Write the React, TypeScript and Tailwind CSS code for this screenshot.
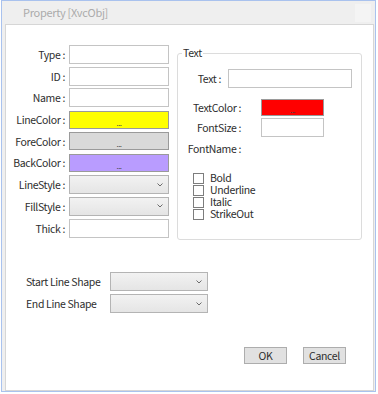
import React from "react";

const font = "font-['Noto_Sans_CJK_KR','Noto_Sans',sans-serif]";

function TextBox({ w = "w-[100px]" }: { w?: string }) {
  return <div className={`${w} h-[19px] border border-[#c4c4c4] bg-white`} />;
}

function ColorBox({ color, w = "w-[100px]", h = "h-[18px]" }: { color: string; w?: string; h?: string }) {
  return (
    <div
      className={`${w} ${h} border border-[#9a9a9a] flex items-end justify-center pb-px`}
      style={{ backgroundColor: color }}
    >
      <span className="text-[8px] leading-[8px] text-[#444] tracking-[-0.6px]">...</span>
    </div>
  );
}

function Combo({ w = "w-[100px]" }: { w?: string }) {
  return (
    <div className={`${w} h-[19px] border border-[#b4b4b4] bg-gradient-to-b from-[#f2f2f2] to-[#e5e5e5] flex items-center justify-end pr-[5px]`}>
      <svg width="6" height="4" viewBox="0 0 6 4">
        <path d="M0.5 0.5 L3 3 L5.5 0.5" stroke="#6b6b6b" strokeWidth="1" fill="none" />
      </svg>
    </div>
  );
}

function Row({ label, children }: { label: string; children: React.ReactNode }) {
  return (
    <div className="flex items-center h-[19px]">
      <span className="w-[60px] text-right pr-px leading-[19px] whitespace-nowrap">{label}</span>
      <div className="ml-[3px]">{children}</div>
    </div>
  );
}

function Check({ label }: { label: string }) {
  return (
    <div className="flex items-center h-[12px]">
      <span className="w-[11px] h-[11px] border border-[#7d7d7d] bg-white" />
      <span className="ml-[6px] leading-[12px] h-[12px]">{label}</span>
    </div>
  );
}

export default function App() {
  return (
    <div className={`w-[378px] h-[394px] bg-white pl-px ${font} text-[10.5px] tracking-[-0.35px] text-[#2e2e2e]`}>
      <div className="w-[375px] h-[392px] border border-[#a9c2ee] bg-[#efefef] flex flex-col">
        {/* title bar */}
        <div className="h-[23px] flex items-center pl-[21px] pr-[4px]">
          <span className="text-[11px] tracking-[-0.3px] text-[#ababab]">Property [XvcObj]</span>
          <span className="ml-auto w-[16px] h-[18px] bg-[#f4f4f4]" />
        </div>

        {/* client area */}
        <div className="flex-1 ml-[3px] mr-px bg-white border border-[#d6d6d6] flex flex-col">
          <div className="flex items-start pt-[20px]">
            {/* left column */}
            <div className="flex flex-col gap-[2.7px]">
              <Row label="Type :"><TextBox /></Row>
              <Row label="ID :"><TextBox /></Row>
              <Row label="Name :"><TextBox /></Row>
              <Row label="LineColor :"><ColorBox color="#ffff00" /></Row>
              <Row label="ForeColor :"><ColorBox color="#d9d9d9" /></Row>
              <Row label="BackColor :"><ColorBox color="#b99cff" /></Row>
              <Row label="LineStyle :"><Combo /></Row>
              <Row label="FillStyle :"><Combo /></Row>
              <Row label="Thick :"><TextBox /></Row>
            </div>

            {/* Text group */}
            <div className="relative ml-[8px] mt-[8px] w-[185px] h-[187px] border border-[#dcdcdc] rounded-[3px] flex flex-col">
              <span className="absolute left-[4px] top-[-9px] bg-white px-px leading-[16px]">Text</span>

              <div className="flex items-center mt-[15px]">
                <span className="w-[43px] text-right leading-[19px]">Text :</span>
                <div className="ml-[7px]"><TextBox w="w-[124px]" /></div>
              </div>

              <div className="flex items-center mt-[11px]">
                <span className="w-[63px] text-right leading-[17px]">TextColor :</span>
                <div className="ml-[20px]"><ColorBox color="#ff0000" w="w-[63px]" h="h-[17px]" /></div>
              </div>

              <div className="flex items-center mt-[2px]">
                <span className="w-[63px] text-right leading-[19px]">FontSize :</span>
                <div className="ml-[20px]"><TextBox w="w-[63px]" /></div>
              </div>

              <div className="flex items-center mt-[2px] h-[19px]">
                <span className="w-[63px] text-right leading-[19px]">FontName :</span>
              </div>

              <div className="flex flex-col ml-[15px] mt-[14px]">
                <Check label="Bold" />
                <Check label="Underline" />
                <Check label="Italic" />
                <Check label="StrikeOut" />
              </div>
            </div>
          </div>

          {/* line shape */}
          <div className="flex flex-col gap-[3px] mt-[32px] pl-[20px]">
            <div className="flex items-center h-[19px]">
              <span className="w-[84px] leading-[19px]">Start Line Shape</span>
              <Combo w="w-[98px]" />
            </div>
            <div className="flex items-center h-[19px]">
              <span className="w-[84px] leading-[19px]">End Line Shape</span>
              <Combo w="w-[98px]" />
            </div>
          </div>

          {/* buttons */}
          <div className="flex gap-[16px] mt-[34px] pl-[238px]">
            <button className="w-[43px] h-[17px] border border-[#adadad] bg-[#e1e1e1] leading-[15px] text-[10.5px] tracking-[-0.35px] text-[#2e2e2e]">OK</button>
            <button className="w-[43px] h-[17px] border border-[#adadad] bg-[#e1e1e1] leading-[15px] text-[10.5px] tracking-[-0.35px] text-[#2e2e2e]">Cancel</button>
          </div>
        </div>
      </div>
    </div>
  );
}
